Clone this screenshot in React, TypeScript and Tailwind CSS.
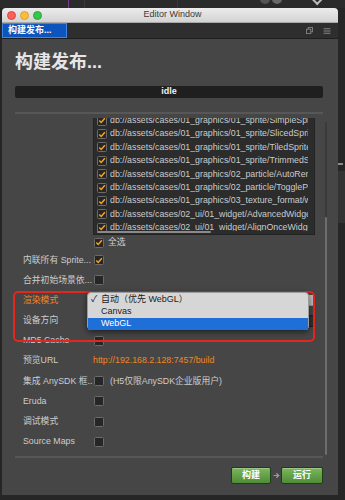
import React from "react";

const scenes = [
  "db://assets/cases/01_graphics/01_sprite/SimpleSprite.fire",
  "db://assets/cases/01_graphics/01_sprite/SlicedSprite.fire",
  "db://assets/cases/01_graphics/01_sprite/TiledSprite.fire",
  "db://assets/cases/01_graphics/01_sprite/TrimmedSprite.fire",
  "db://assets/cases/01_graphics/02_particle/AutoRemoveParticle.fire",
  "db://assets/cases/01_graphics/02_particle/ToggleParticle.fire",
  "db://assets/cases/01_graphics/03_texture_format/webp.fire",
  "db://assets/cases/02_ui/01_widget/AdvancedWidget.fire",
  "db://assets/cases/02_ui/01_widget/AlignOnceWidget.fire",
];

function Check({ on }: { on?: boolean }) {
  return (
    <span className="flex h-[10px] w-[10px] shrink-0 items-center justify-center rounded-[1.5px] border border-[#6b6b6b] bg-[#262626]">
      {on && (
        <svg viewBox="0 0 10 10" className="h-[9px] w-[9px]">
          <path d="M1.6 5.1 L4 7.5 L8.6 2.2" fill="none" stroke="#f5a31f" strokeWidth={1.9} />
        </svg>
      )}
    </span>
  );
}

function Row({ label, orange, children }: { label: string; orange?: boolean; children?: React.ReactNode }) {
  return (
    <div className="flex h-[20.2px] items-center">
      <div className={`w-[70px] shrink-0 whitespace-nowrap ${orange ? "text-[#f2861f]" : "text-[#cdcdcd]"}`}>{label}</div>
      <div className="flex flex-1 items-center">{children}</div>
    </div>
  );
}

export default function App() {
  return (
    <div className="relative h-[500px] w-[345px] overflow-hidden bg-[#262626] font-['Liberation_Sans','Noto_Sans_CJK_SC',sans-serif]">
      {/* desktop strip behind the window */}
      <div className="flex h-[8px] items-start bg-[#2b2b2b]">
        <div className="ml-[68px] h-[8px] w-[1px] bg-[#7b3a8c]" />
        <div className="ml-[15px] h-[8px] w-[1px] bg-[#3a3a3a]" />
        <div className="ml-[92px] h-[8px] w-[1px] bg-[#3a3a3a]" />
        <div className="ml-[82px] -mt-[6px] h-[10px] w-[10px] rounded-full bg-[#555]" />
        <div className="ml-[2px] -mt-[6px] h-[10px] w-[10px] rounded-full bg-[#6a6a6a]" />
        <div className="ml-[30px] -mt-[4px] h-[7px] w-[9px] rotate-45 border-b-2 border-r-2 border-[#bbb]" />
      </div>

      <div className="flex">
        {/* window */}
        <div className="ml-[2px] flex w-[336px] flex-col overflow-hidden rounded-t-[4px]">
          {/* title bar */}
          <div className="relative flex h-[15px] items-center border-b border-[#a9a9a9] bg-gradient-to-b from-[#ececec] to-[#d3d3d3]">
            <div className="ml-[5px] flex gap-[4px]">
              <span className="h-[9px] w-[9px] rounded-full border border-[#d44a40] bg-[#fc605b]" />
              <span className="h-[9px] w-[9px] rounded-full border border-[#d8a22d] bg-[#fdbc40]" />
              <span className="h-[9px] w-[9px] rounded-full border border-[#2fa33b] bg-[#34c84a]" />
            </div>
            <div className="flex-1 pr-[35px] text-center text-[9px] text-[#3a3a3a]">Editor Window</div>
          </div>

          {/* tab bar */}
          <div className="flex h-[15px] items-stretch bg-[#2e2e2e]">
            <div className="flex w-[65px] items-center border border-[#3d86e6] bg-[#0d55bd] pl-[5px] text-[9px] font-bold text-white">
              构建发布...
            </div>
            <div className="flex flex-1 items-center justify-end gap-[10px] pr-[7px]">
              <svg viewBox="0 0 8 8" className="h-[7px] w-[7px]">
                <rect x="2.5" y="0.5" width="5" height="5" fill="none" stroke="#858585" />
                <rect x="0.5" y="2.5" width="5" height="5" fill="#2e2e2e" stroke="#858585" />
              </svg>
              <svg viewBox="0 0 8 7" className="h-[6px] w-[8px]">
                <path d="M0 0.75 H8 M0 3.5 H8 M0 6.25 H8" stroke="#858585" strokeWidth={1.2} />
              </svg>
            </div>
          </div>

          {/* body */}
          <div className="flex h-[457px] flex-col border-t border-[#1f1f1f] bg-[#464646] pl-[13px] pr-[15px] text-[8.8px]">
            <div className="mt-[11px] text-[18px] font-bold leading-[24px] text-[#e6e6e6]">构建发布...</div>
            <div className="mt-[12px] flex h-[12px] items-center justify-center rounded-[2px] bg-[#1f1f1f] text-[9px] font-bold text-[#f0f0f0]">
              idle
            </div>
            <div className="mt-[14px] h-[2px] bg-[#575757]" />

            {/* scroll region */}
            <div className="-mr-[4px] mt-[4px] flex h-[337px] overflow-hidden">
              <div className="flex-1 pl-[8px]">
                <div className="ml-[70px] -mt-[5px] flex w-[222px] flex-col border border-[#232323] bg-[#2c2c2c]">
                  <div className="h-[117px] overflow-hidden pl-[3px] pr-[6px]">
                    {scenes.map((s) => (
                      <div key={s} className="flex h-[13.4px] items-center gap-[3px]">
                        <Check on />
                        <span className="overflow-hidden whitespace-nowrap text-[#cbcbcb]">{s}</span>
                      </div>
                    ))}
                  </div>
                  <div className="h-[3px] pl-[3px]">
                    <div className="h-[2px] w-[114px] rounded-full bg-[#8a8a8a]" />
                  </div>
                </div>

                <div className="flex h-[15px] items-center gap-[4px] pl-[71px]">
                  <Check on />
                  <span className="text-[#cdcdcd]">全选</span>
                </div>

                <Row label="内联所有 Sprite...">
                  <span className="ml-[1px]"><Check on /></span>
                </Row>
                <Row label="合并初始场景依...">
                  <span className="ml-[1px]"><Check /></span>
                </Row>
                <Row label="渲染模式" orange>
                  <div className="h-[11px] w-[222px] rounded-[2px] border-b-[1.5px] border-[#e8862a] bg-[#bcbcbc]" />
                </Row>
                <Row label="设备方向">
                  <div className="h-[12px] w-[222px] rounded-[2px] border border-[#1e1e1e] bg-[#303030]" />
                </Row>
                <Row label="MD5 Cache">
                  <span className="ml-[1px]"><Check /></span>
                </Row>
                <Row label="预览URL">
                  <span className="font-medium text-[#f2861f]">http://192.168.2.128:7457/build</span>
                </Row>
                <Row label="集成 AnySDK 框..">
                  <span className="ml-[1px]"><Check /></span>
                  <span className="ml-[6px] text-[#cdcdcd]">(H5仅限AnySDK企业版用户)</span>
                </Row>
                <Row label="Eruda">
                  <span className="ml-[1px]"><Check /></span>
                </Row>
                <Row label="调试模式">
                  <span className="ml-[1px]"><Check /></span>
                </Row>
                <Row label="Source Maps">
                  <span className="ml-[1px]"><Check /></span>
                </Row>
              </div>
              <div className="ml-[2px] mt-[4px] flex w-[2px] flex-col bg-[#3a3a3a]">
                <div className="mt-[95px] flex-1 rounded-full bg-[#6d6d6d]" />
              </div>
            </div>

            <div className="mt-[1px] h-[2px] bg-[#575757]" />

            <div className="mt-[9px] flex items-center justify-end">
              <button className="flex h-[17px] w-[40px] items-center justify-center rounded-[2px] border border-[#1f3d16] bg-gradient-to-b from-[#7ab75d] to-[#4f8c37] text-[9px] font-bold text-white shadow-[inset_0_1px_0_rgba(255,255,255,0.25)]">
                构建
              </button>
              <div className="flex w-[10px] justify-center">
                <svg viewBox="0 0 8 8" className="h-[7px] w-[7px]">
                  <path d="M0.5 4 H6 M3.8 1.5 L6.5 4 L3.8 6.5" fill="none" stroke="#9a9a9a" strokeWidth={1.4} />
                </svg>
              </div>
              <button className="flex h-[17px] w-[42px] items-center justify-center rounded-[2px] border border-[#1f3d16] bg-gradient-to-b from-[#7ab75d] to-[#4f8c37] text-[9px] font-bold text-white shadow-[inset_0_1px_0_rgba(255,255,255,0.25)]">
                运行
              </button>
            </div>
          </div>
        </div>

        {/* strip right of the window */}
        <div className="flex w-[7px] flex-col">
          <div className="mt-[155px] h-[2px] w-[5px] bg-[#8a8a8a]" />
          <div className="mt-[6px] h-[52px] bg-[#333333]" />
        </div>
      </div>

      {/* highlight around the render-mode row */}
      <div className="absolute left-[13px] top-[291px] h-[51px] w-[302px] rounded-[5px] border-2 border-[#e3261f]" />

      {/* open select menu */}
      <div className="absolute left-[87px] top-[292px] flex h-[38px] w-[222px] flex-col rounded-[4px] border border-[#9c9c9c] bg-[#d6d6d6] pt-[1px] text-[9px] text-[#1c1c1c] shadow-[0_2px_6px_rgba(0,0,0,0.55)] font-['Liberation_Sans','Noto_Sans_CJK_SC',sans-serif]">
        <div className="flex h-[12px] items-center">
          <span className="w-[13px] pl-[3px] text-[9px]">✓</span>
          <span>自动（优先 WebGL）</span>
        </div>
        <div className="flex h-[12px] items-center pl-[13px]">Canvas</div>
        <div className="flex h-[12px] items-center bg-[#1f6fd8] pl-[13px] text-white">WebGL</div>
      </div>
    </div>
  );
}
